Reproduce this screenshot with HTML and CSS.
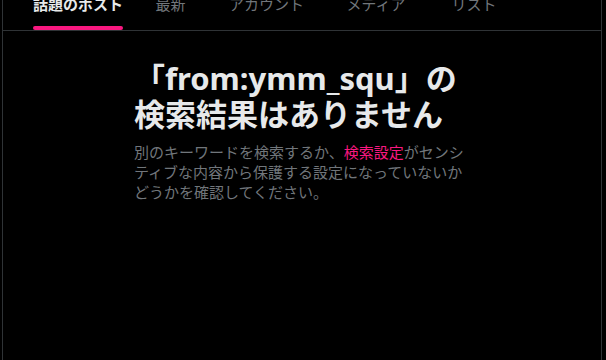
FILE: index.html
```html
<!DOCTYPE html>
<html lang="ja">
<head>
    <meta charset="UTF-8">
    <meta name="viewport" content="width=device-width, initial-scale=1.0">
    <title>検索結果</title>
    <link rel="stylesheet" href="styles.css">
</head>
<body>
    <main class="column">
        <nav class="tabs">
            <a class="tab tab-top active" href="#"><span class="tab-label">話題のポスト</span></a>
            <a class="tab tab-latest" href="#"><span class="tab-label">最新</span></a>
            <a class="tab tab-people" href="#"><span class="tab-label">アカウント</span></a>
            <a class="tab tab-media" href="#"><span class="tab-label">メディア</span></a>
            <a class="tab tab-lists" href="#"><span class="tab-label">リスト</span></a>
        </nav>

        <section class="empty-state">
            <h2 class="empty-title">「from:ymm_squ」の検索結果はありません</h2>
            <p class="empty-text">別のキーワードを検索するか、<a href="#" class="empty-link">検索設定</a>がセンシティブな内容から保護する設定になっていないかどうかを確認してください。</p>
        </section>
    </main>
</body>
</html>
```

FILE: styles.css
```css
html, body {
    margin: 0;
    padding: 0;
    background: #000;
    height: 100%;
    overflow: hidden;
}

body {
    font-family: "Noto Sans", "Noto Sans CJK JP", sans-serif;
    color: #e7e9ea;
}

.column {
    width: 598px;
    min-height: calc(100% + 22px);
    margin: -22px 0 0 2px;
    border-left: 1px solid #2f3336;
    border-right: 1px solid #2f3336;
}

.tabs {
    display: flex;
    height: 52px;
    padding-left: 14px;
    border-bottom: 1px solid #2f3336;
}

.tab {
    display: flex;
    align-items: center;
    justify-content: center;
    color: #71767b;
    text-decoration: none;
    font-size: 15px;
    line-height: 20px;
}

.tab-top { width: 122px; }
.tab-latest { width: 63px; margin-right: 5px; }
.tab-people { width: 119px; }
.tab-media { width: 100px; }
.tab-lists { width: 96px; }

.tab-label {
    position: relative;
}

.tab.active {
    color: #e7e9ea;
    font-weight: 700;
}

.tab.active .tab-label::after {
    content: "";
    position: absolute;
    left: 0;
    right: 0;
    top: 32px;
    height: 4px;
    border-radius: 2px;
    background: #f91880;
}

.empty-state {
    width: 336px;
    margin: 29px auto 0;
}

.empty-title {
    margin: 0 0 10px;
    font-size: 31px;
    line-height: 36px;
    font-weight: 700;
    color: #e7e9ea;
}

.empty-text {
    margin: 0;
    font-size: 15px;
    line-height: 20px;
    color: #71767b;
}

.empty-link {
    color: #f91880;
    text-decoration: none;
}
```
